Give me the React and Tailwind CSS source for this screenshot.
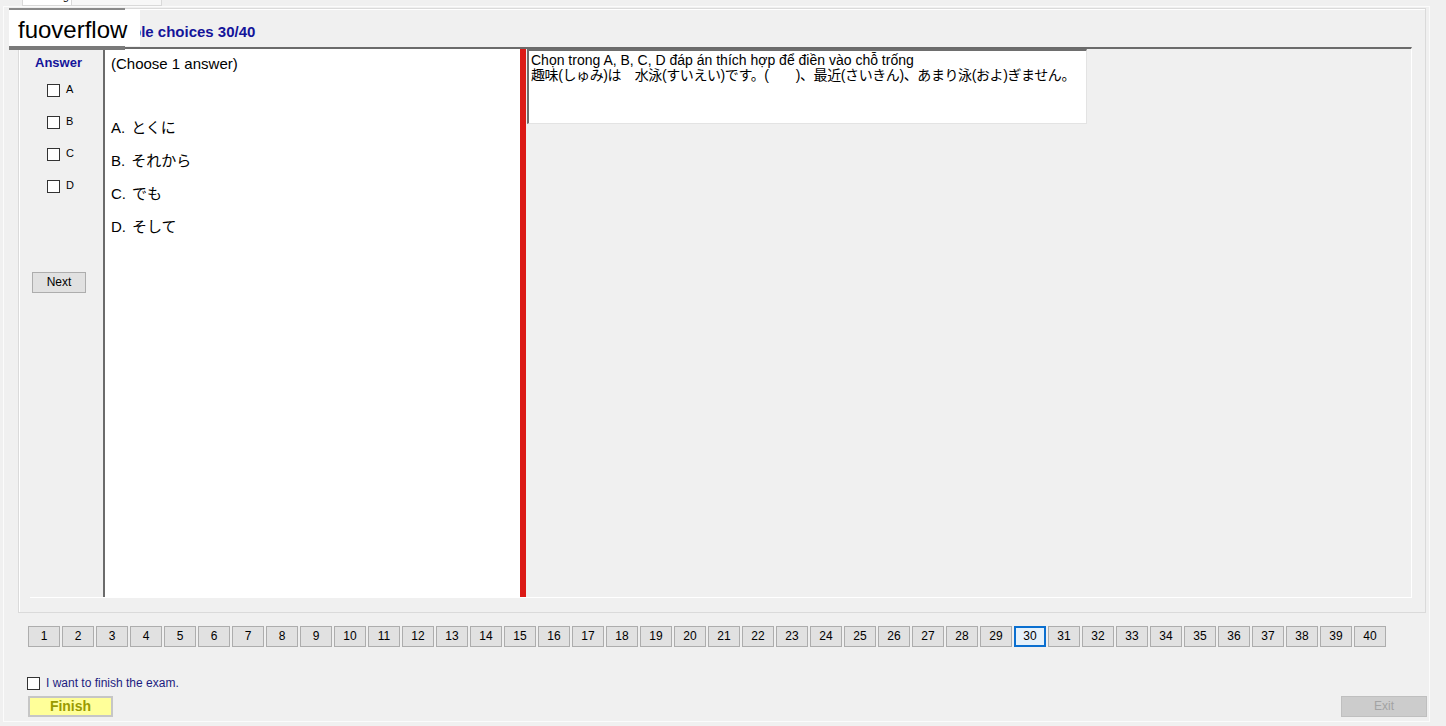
import React from 'react';

const options = [
  { key: 'A', text: 'とくに' },
  { key: 'B', text: 'それから' },
  { key: 'C', text: 'でも' },
  { key: 'D', text: 'そして' },
];

const questions = Array.from({ length: 40 }, (_, i) => i + 1);
const current = 30;

const Box = () => (
  <span className="inline-block w-[13px] h-[13px] border border-[#333333] bg-white" />
);

export default function App() {
  return (
    <div className="relative w-[1446px] h-[726px] overflow-hidden bg-[#f0f0f0] text-black font-['Liberation_Sans','Noto_Sans_CJK_JP',sans-serif]">
      {/* tab headers, mostly scrolled off the top */}
      <div className="flex h-[6px] pl-[22px] overflow-hidden">
        <div className="w-[50px] h-[20px] -mt-[14px] border border-[#d9d9d9] bg-white text-[11px] leading-[18px] pl-[5px]">Reading</div>
        <div className="w-[90px] h-[20px] -mt-[14px] border border-l-0 border-[#d9d9d9] bg-[#f7f7f7]" />
      </div>

      {/* tab page */}
      <div className="ml-[3px] w-[1427px] h-[716px] border border-[#fbfbfb] pt-[1px] pl-[14px]">
        {/* group box */}
        <div className="w-[1408px] h-[605px] border border-[#dadada] shadow-[inset_1px_1px_0_#ffffff] pl-[11px] pt-[15px]">
          <div className="h-[23px] ml-[67px] text-[15px] leading-[15px] font-bold text-[#14149a]">Multiple choices 30/40</div>

          <div className="flex w-[1382px] h-[551px] border-t-2 border-[#6b6b6b] border-r border-b border-r-white border-b-white">
            {/* answer column */}
            <div className="w-[73px] flex flex-col pt-[6px]">
              <div className="pl-[5px] text-[13px] leading-[16px] font-bold text-[#14149a]">Answer</div>
              <div className="mt-[3px] flex flex-col">
                {options.map((o) => (
                  <div key={o.key} className="h-[32px] flex items-center pl-[17px]">
                    <Box />
                    <span className="ml-[6px] -mt-[2px] text-[11px] leading-[12px]">{o.key}</span>
                  </div>
                ))}
              </div>
              <button className="mt-[70px] ml-[2px] w-[54px] h-[21px] border border-[#adadad] bg-[#e1e1e1] text-[12px] leading-[19px] text-black">Next</button>
            </div>

            {/* choices panel */}
            <div className="w-[417px] bg-white border-l-2 border-[#6b6b6b] pl-[6px] pt-[6px]">
              <div className="text-[15px] leading-[17px]">(Choose 1 answer)</div>
              <div className="mt-[40px] flex flex-col">
                {options.map((o) => (
                  <div key={o.key} className="h-[33px] flex items-center text-[15px]">
                    <span>{o.key}.</span>
                    <span className="ml-[6px]">{o.text}</span>
                  </div>
                ))}
              </div>
            </div>

            {/* splitter */}
            <div className="w-[6px] bg-[#dc1a16]" />

            {/* question panel */}
            <div className="flex-1 pl-[1px]">
              <div className="w-[560px] h-[75px] bg-white border-t-2 border-l-2 border-[#6e6e6e] border-r border-b border-r-[#e3e3e3] border-b-[#e3e3e3] pl-[2px] pt-[2px] text-[14px] leading-[15px] whitespace-nowrap overflow-hidden">
                <div>Chọn trong A, B, C, D đáp án thích hợp để điền vào chỗ trống</div>
                <div className="tracking-[-0.4px]">趣味(しゅみ)は　水泳(すいえい)です。(　　)、最近(さいきん)、あまり泳(およ)ぎません。</div>
              </div>
            </div>
          </div>
        </div>

        {/* question navigator */}
        <div className="mt-[13px] ml-[10px] flex gap-[2px]">
          {questions.map((n) =>
            n === current ? (
              <button key={n} className="w-[32px] h-[21px] border-2 border-[#0a6fd0] bg-[#e5f1fb] text-[12px] leading-[17px]">{n}</button>
            ) : (
              <button key={n} className="w-[32px] h-[21px] border border-[#adadad] bg-[#e1e1e1] text-[12px] leading-[19px]">{n}</button>
            )
          )}
        </div>

        <div className="mt-[30px] ml-[9px] flex items-center">
          <Box />
          <span className="ml-[6px] text-[12px] leading-[13px] text-[#1c1c80]">I want to finish the exam.</span>
        </div>

        <div className="mt-[6px] flex justify-between items-center">
          <button className="ml-[10px] w-[85px] h-[21px] border-2 border-[#c6c6c6] bg-[#ffff99] text-[14px] leading-[17px] font-bold text-[#9a9a00]">Finish</button>
          <button className="mr-[2px] w-[86px] h-[21px] border border-[#bfbfbf] bg-[#cccccc] text-[12px] leading-[19px] text-[#a3a3a3]">Exit</button>
        </div>
      </div>

      {/* floating watermark label */}
      <div className="absolute left-[9px] top-[8px] flex flex-col">
        <div className="w-[116px] h-[2px] bg-[#8a8a8a]" />
        <div className="w-[131px] h-[36px] bg-white pl-[9px] pt-[3px] text-[24px] leading-[33px]">fuoverflow</div>
        <div className="w-[116px] h-[4px] bg-[#7a7a7a]" />
      </div>
    </div>
  );
}
